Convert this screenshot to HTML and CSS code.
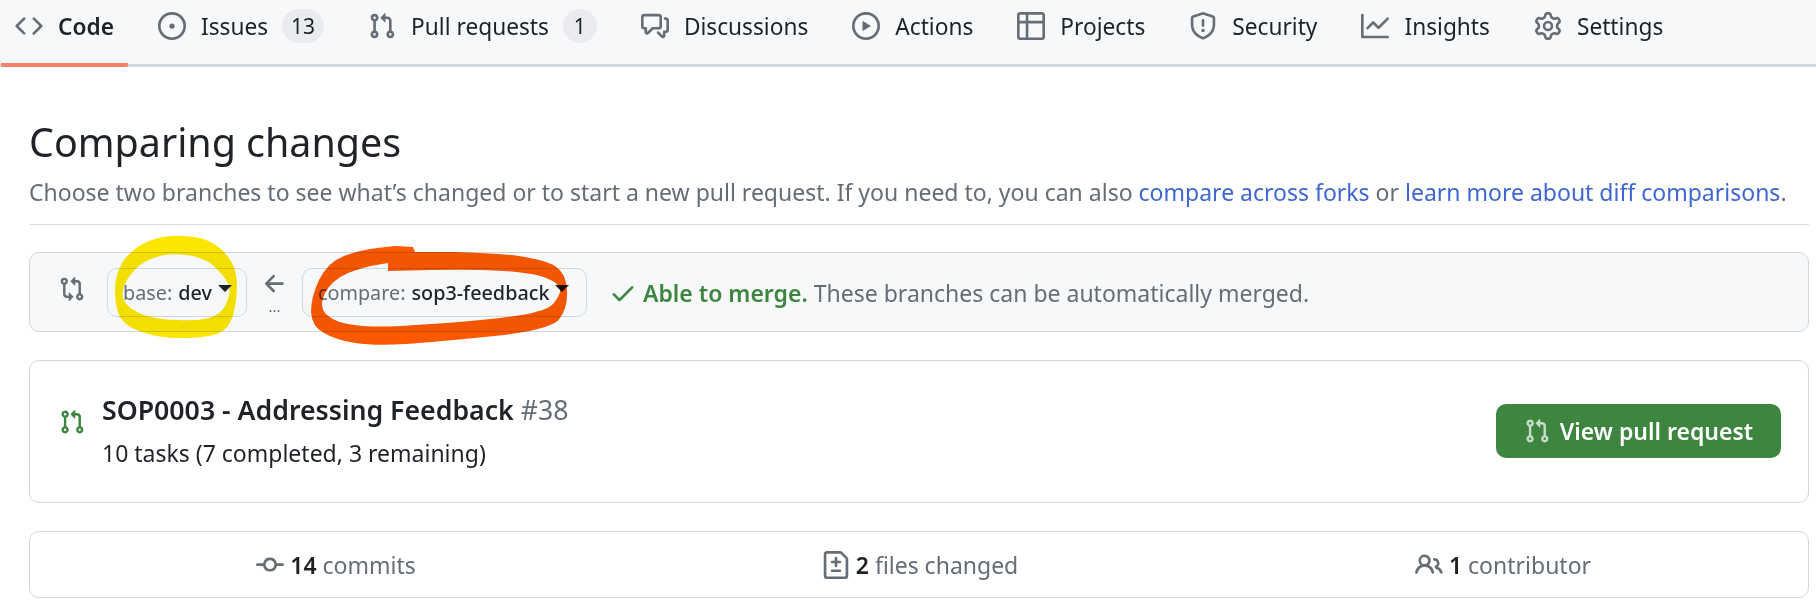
FILE: index.html
```html
<!DOCTYPE html>
<html lang="en">
<head>
  <meta charset="UTF-8">
  <title>Comparing changes</title>
  <link rel="stylesheet" href="styles.css">
</head>
<body>
  <svg class="sprite" xmlns="http://www.w3.org/2000/svg">
    <symbol id="i-code" viewBox="0 0 16 16"><path d="M11.28 3.22a.75.75 0 0 0-1.06 1.06L13.94 8l-3.72 3.72a.75.75 0 1 0 1.06 1.06l4.25-4.25a.75.75 0 0 0 0-1.06Zm-6.56 0a.75.75 0 0 1 1.06 1.06L2.06 8l3.72 3.72a.75.75 0 0 1-1.06 1.06L.47 8.53a.75.75 0 0 1 0-1.06Z"/></symbol>
    <symbol id="i-issue" viewBox="0 0 16 16"><path d="M8 9.5a1.5 1.5 0 1 0 0-3 1.5 1.5 0 0 0 0 3Z"/><path d="M8 0a8 8 0 1 1 0 16A8 8 0 0 1 8 0ZM1.5 8a6.5 6.5 0 1 0 13 0 6.5 6.5 0 0 0-13 0Z"/></symbol>
    <symbol id="i-pr" viewBox="0 0 16 16"><path d="M1.5 3.25a2.25 2.25 0 1 1 3 2.122v5.256a2.251 2.251 0 1 1-1.5 0V5.372A2.25 2.25 0 0 1 1.5 3.25Zm5.677-.177L9.573.677A.25.25 0 0 1 10 .854V2.5h1A2.5 2.5 0 0 1 13.5 5v5.628a2.251 2.251 0 1 1-1.5 0V5a1 1 0 0 0-1-1h-1v1.646a.25.25 0 0 1-.427.177L7.177 3.427a.25.25 0 0 1 0-.354ZM3.75 2.5a.75.75 0 1 0 0 1.5.75.75 0 0 0 0-1.5Zm0 9.5a.75.75 0 1 0 0 1.5.75.75 0 0 0 0-1.5Zm8.25.75a.75.75 0 1 0 1.5 0 .75.75 0 0 0-1.5 0Z"/></symbol>
    <symbol id="i-discuss" viewBox="0 0 16 16"><path d="M1.75 1h8.5c.966 0 1.75.784 1.75 1.75v5.5A1.75 1.75 0 0 1 10.25 10H7.061l-2.574 2.573A1.458 1.458 0 0 1 2 11.543V10h-.25A1.75 1.75 0 0 1 0 8.25v-5.5C0 1.784.784 1 1.75 1ZM1.5 2.75v5.5c0 .138.112.25.25.25h1a.75.75 0 0 1 .75.75v2.19l2.72-2.72a.749.749 0 0 1 .53-.22h3.5a.25.25 0 0 0 .25-.25v-5.5a.25.25 0 0 0-.25-.25h-8.5a.25.25 0 0 0-.25.25Zm13 2a.25.25 0 0 0-.25-.25h-.5a.75.75 0 0 1 0-1.5h.5c.966 0 1.75.784 1.75 1.75v5.5A1.75 1.75 0 0 1 14.25 12H14v1.543a1.458 1.458 0 0 1-2.487 1.03L9.22 12.28a.749.749 0 0 1 .326-1.275.749.749 0 0 1 .734.215l2.22 2.22v-2.19a.75.75 0 0 1 .75-.75h1a.25.25 0 0 0 .25-.25Z"/></symbol>
    <symbol id="i-play" viewBox="0 0 16 16"><path d="M8 0a8 8 0 1 1 0 16A8 8 0 0 1 8 0ZM1.5 8a6.5 6.5 0 1 0 13 0 6.5 6.5 0 0 0-13 0Zm4.879-2.773 4.264 2.559a.25.25 0 0 1 0 .428l-4.264 2.559A.25.25 0 0 1 6 10.559V5.442a.25.25 0 0 1 .379-.215Z"/></symbol>
    <symbol id="i-table" viewBox="0 0 16 16"><path d="M0 1.75C0 .784.784 0 1.75 0h12.5C15.216 0 16 .784 16 1.75v12.5A1.75 1.75 0 0 1 14.25 16H1.75A1.75 1.75 0 0 1 0 14.25ZM6.5 6.5v8h7.75a.25.25 0 0 0 .25-.25V6.5Zm8-1.5V1.75a.25.25 0 0 0-.25-.25H6.5V5Zm-13 1.5v7.75c0 .138.112.25.25.25H5v-8ZM5 5V1.5H1.75a.25.25 0 0 0-.25.25V5Z"/></symbol>
    <symbol id="i-shield" viewBox="0 0 16 16"><path d="M7.467.133a1.748 1.748 0 0 1 1.066 0l5.25 1.68A1.75 1.75 0 0 1 15 3.48V7c0 1.566-.32 3.182-1.303 4.682-.983 1.498-2.585 2.813-5.032 3.855a1.697 1.697 0 0 1-1.33 0c-2.447-1.042-4.049-2.357-5.032-3.855C1.32 10.182 1 8.566 1 7V3.48a1.75 1.75 0 0 1 1.217-1.667Zm.61 1.429a.25.25 0 0 0-.153 0l-5.25 1.68a.25.25 0 0 0-.174.238V7c0 1.358.275 2.666 1.057 3.86.784 1.194 2.121 2.34 4.366 3.297a.196.196 0 0 0 .154 0c2.245-.956 3.582-2.104 4.366-3.298C13.225 9.666 13.5 8.36 13.5 7V3.48a.251.251 0 0 0-.174-.237l-5.25-1.68ZM8.75 4.75v3a.75.75 0 0 1-1.5 0v-3a.75.75 0 0 1 1.5 0ZM9 10.5a1 1 0 1 1-2 0 1 1 0 0 1 2 0Z"/></symbol>
    <symbol id="i-graph" viewBox="0 0 16 16"><path d="M1.5 1.75V13.5h13.75a.75.75 0 0 1 0 1.5H.75a.75.75 0 0 1-.75-.75V1.75a.75.75 0 0 1 1.5 0Zm14.28 2.53-5.25 5.25a.75.75 0 0 1-1.06 0L7 7.06 4.28 9.78a.751.751 0 0 1-1.042-.018.751.751 0 0 1-.018-1.042l3.25-3.25a.75.75 0 0 1 1.06 0L10 7.94l4.72-4.72a.751.751 0 0 1 1.042.018.751.751 0 0 1 .018 1.042Z"/></symbol>
    <symbol id="i-gear" viewBox="0 0 16 16"><path d="M8 0a8.2 8.2 0 0 1 .701.031C9.444.095 9.99.645 10.16 1.29l.288 1.107c.018.066.079.158.212.224.231.114.454.243.668.386.123.082.233.09.299.071l1.103-.303c.644-.176 1.392.021 1.82.63.27.385.506.792.704 1.218.315.675.111 1.422-.364 1.891l-.814.806c-.049.048-.098.147-.088.294.016.257.016.515 0 .772-.01.147.038.246.088.294l.814.806c.475.469.679 1.216.364 1.891a7.977 7.977 0 0 1-.704 1.217c-.428.61-1.176.807-1.82.63l-1.102-.302c-.067-.019-.177-.011-.3.071a5.909 5.909 0 0 1-.668.386c-.133.066-.194.158-.211.224l-.29 1.106c-.168.646-.715 1.196-1.458 1.26a8.006 8.006 0 0 1-1.402 0c-.743-.064-1.289-.614-1.458-1.26l-.289-1.106c-.018-.066-.079-.158-.212-.224a5.738 5.738 0 0 1-.668-.386c-.123-.082-.233-.09-.299-.071l-1.103.303c-.644.176-1.392-.021-1.82-.63a8.12 8.12 0 0 1-.704-1.218c-.315-.675-.111-1.422.363-1.891l.815-.806c.05-.048.098-.147.088-.294a6.214 6.214 0 0 1 0-.772c.01-.147-.038-.246-.088-.294l-.815-.806C.635 6.045.431 5.298.746 4.623a7.92 7.92 0 0 1 .704-1.217c.428-.61 1.176-.807 1.82-.63l1.102.302c.067.019.177.011.3-.071.214-.143.437-.272.668-.386.133-.066.194-.158.211-.224l.29-1.106C6.009.645 6.556.095 7.299.03 7.53.01 7.764 0 8 0Zm-.571 1.525c-.036.003-.108.036-.137.146l-.289 1.105c-.147.561-.549.967-.998 1.189-.173.086-.34.183-.5.29-.417.278-.97.423-1.529.27l-1.103-.303c-.109-.03-.175.016-.195.045-.22.312-.412.644-.573.99-.014.031-.021.11.059.19l.815.806c.411.406.562.957.53 1.456a4.709 4.709 0 0 0 0 .582c.032.499-.119 1.05-.53 1.456l-.815.806c-.081.08-.073.159-.059.19.162.346.353.677.573.989.02.03.085.076.195.046l1.102-.303c.56-.153 1.113-.008 1.53.27.161.107.328.204.501.29.447.222.85.629.997 1.189l.289 1.105c.029.109.101.143.137.146a6.6 6.6 0 0 0 1.142 0c.036-.003.108-.036.137-.146l.289-1.105c.147-.561.549-.967.998-1.189.173-.086.34-.183.5-.29.417-.278.97-.423 1.529-.27l1.103.303c.109.029.175-.016.195-.045.22-.313.411-.644.573-.99.014-.031.021-.11-.059-.19l-.815-.806c-.411-.406-.562-.957-.53-1.456a4.709 4.709 0 0 0 0-.582c-.032-.499.119-1.05.53-1.456l.815-.806c.081-.08.073-.159.059-.19a6.464 6.464 0 0 0-.573-.989c-.02-.03-.085-.076-.195-.046l-1.102.303c-.56.153-1.113.008-1.53-.27a4.44 4.44 0 0 0-.501-.29c-.447-.222-.85-.629-.997-1.189l-.289-1.105c-.029-.11-.101-.143-.137-.146a6.6 6.6 0 0 0-1.142 0ZM11 8a3 3 0 1 1-6 0 3 3 0 0 1 6 0ZM9.5 8a1.5 1.5 0 1 0-3.001.001A1.5 1.5 0 0 0 9.5 8Z"/></symbol>
    <symbol id="i-compare" viewBox="0 0 16 16"><path d="M9.573.677A.25.25 0 0 1 10 .854V2.5h1A2.5 2.5 0 0 1 13.5 5v5.628a2.251 2.251 0 1 1-1.5 0V5a1 1 0 0 0-1-1h-1v1.646a.25.25 0 0 1-.427.177L7.177 3.427a.25.25 0 0 1 0-.354ZM6 12v-1.646a.25.25 0 0 1 .427-.177l2.396 2.396a.25.25 0 0 1 0 .354l-2.396 2.396A.25.25 0 0 1 6 15.146V13.5H5A2.5 2.5 0 0 1 2.5 11V5.372a2.25 2.25 0 1 1 1.5 0V11a1 1 0 0 0 1 1ZM4 3.25a.75.75 0 1 0-1.5 0 .75.75 0 0 0 1.5 0ZM12.75 12a.75.75 0 1 0 0 1.5.75.75 0 0 0 0-1.5Z"/></symbol>
    <symbol id="i-arrow" viewBox="0 0 16 16"><path d="M7.78 12.53a.75.75 0 0 1-1.06 0L2.47 8.28a.75.75 0 0 1 0-1.06l4.25-4.25a.751.751 0 0 1 1.042.018.751.751 0 0 1 .018 1.042L4.81 7h7.44a.75.75 0 0 1 0 1.5H4.81l2.97 2.97a.75.75 0 0 1 0 1.06Z"/></symbol>
    <symbol id="i-check" viewBox="0 0 16 16"><path d="M13.78 4.22a.75.75 0 0 1 0 1.06l-7.25 7.25a.75.75 0 0 1-1.06 0L2.22 9.28a.751.751 0 0 1 .018-1.042.751.751 0 0 1 1.042-.018L6 10.94l6.72-6.72a.75.75 0 0 1 1.06 0Z"/></symbol>
    <symbol id="i-commit" viewBox="0 0 16 16"><path d="M11.93 8.5a4.002 4.002 0 0 1-7.86 0H.75a.75.75 0 0 1 0-1.5h3.32a4.002 4.002 0 0 1 7.86 0h3.32a.75.75 0 0 1 0 1.5Zm-1.43-.75a2.5 2.5 0 1 0-5 0 2.5 2.5 0 0 0 5 0Z"/></symbol>
    <symbol id="i-diff" viewBox="0 0 16 16"><path d="M1 1.75C1 .784 1.784 0 2.75 0h7.586c.464 0 .909.184 1.237.513l2.914 2.914c.329.328.513.773.513 1.237v9.586A1.75 1.75 0 0 1 13.25 16H2.75A1.75 1.75 0 0 1 1 14.25Zm1.75-.25a.25.25 0 0 0-.25.25v12.5c0 .138.112.25.25.25h10.5a.25.25 0 0 0 .25-.25V4.664a.25.25 0 0 0-.073-.177l-2.914-2.914a.25.25 0 0 0-.177-.073ZM8 3.25a.75.75 0 0 1 .75.75v1.5h1.5a.75.75 0 0 1 0 1.5h-1.5v1.5a.75.75 0 0 1-1.5 0V7h-1.5a.75.75 0 0 1 0-1.5h1.5V4A.75.75 0 0 1 8 3.25Zm-3 8a.75.75 0 0 1 .75-.75h4.5a.75.75 0 0 1 0 1.5h-4.5a.75.75 0 0 1-.75-.75Z"/></symbol>
    <symbol id="i-people" viewBox="0 0 16 16"><path d="M2 5.5a3.5 3.5 0 1 1 5.898 2.549 5.508 5.508 0 0 1 3.034 4.084.75.75 0 1 1-1.482.235 4 4 0 0 0-7.9 0 .75.75 0 0 1-1.482-.236A5.507 5.507 0 0 1 3.102 8.05 3.493 3.493 0 0 1 2 5.5ZM11 4a3.001 3.001 0 0 1 2.22 5.018 5.01 5.01 0 0 1 2.56 3.012.749.749 0 0 1-.885.954.752.752 0 0 1-.549-.514 3.507 3.507 0 0 0-2.522-2.372.75.75 0 0 1-.574-.73v-.352a.75.75 0 0 1 .416-.672A1.5 1.5 0 0 0 11 5.5.75.75 0 0 1 11 4Zm-5.5-.5a2 2 0 1 0-.001 3.999A2 2 0 0 0 5.5 3.5Z"/></symbol>
  </svg>

  <nav class="tabs">
    <a class="tab current"><svg class="icon"><use href="#i-code"/></svg><span>Code</span></a>
    <a class="tab"><svg class="icon"><use href="#i-issue"/></svg><span>Issues</span><span class="counter">13</span></a>
    <a class="tab"><svg class="icon"><use href="#i-pr"/></svg><span>Pull requests</span><span class="counter">1</span></a>
    <a class="tab"><svg class="icon"><use href="#i-discuss"/></svg><span>Discussions</span></a>
    <a class="tab"><svg class="icon"><use href="#i-play"/></svg><span>Actions</span></a>
    <a class="tab"><svg class="icon"><use href="#i-table"/></svg><span>Projects</span></a>
    <a class="tab"><svg class="icon"><use href="#i-shield"/></svg><span>Security</span></a>
    <a class="tab"><svg class="icon"><use href="#i-graph"/></svg><span>Insights</span></a>
    <a class="tab"><svg class="icon"><use href="#i-gear"/></svg><span>Settings</span></a>
  </nav>

  <main class="content">
    <div class="subhead">
      <h1>Comparing changes</h1>
      <p>Choose two branches to see what’s changed or to start a new pull request. If you need to, you can also <a>compare across forks</a> or <a>learn more about diff comparisons</a>.</p>
    </div>

    <div class="range">
      <svg class="icon range-icon"><use href="#i-compare"/></svg>
      <div class="branch base-branch"><span class="muted">base:</span> <b>dev</b><i class="caret"></i></div>
      <div class="range-sep">
        <svg class="icon arrow"><use href="#i-arrow"/></svg>
        <span>...</span>
      </div>
      <div class="branch head-branch"><span class="muted">compare:</span> <b>sop3-feedback</b><i class="caret"></i></div>
      <svg class="icon check"><use href="#i-check"/></svg>
      <div class="merge"><b>Able to merge.</b> <span class="muted">These branches can be automatically merged.</span></div>
    </div>

    <div class="card pr-card">
      <svg class="icon pr-icon"><use href="#i-pr"/></svg>
      <div class="pr-text">
        <div class="pr-title"><b>SOP0003 - Addressing Feedback</b> <span class="muted">#38</span></div>
        <div class="pr-tasks">10 tasks (7 completed, 3 remaining)</div>
      </div>
      <a class="btn"><svg class="icon"><use href="#i-pr"/></svg>View pull request</a>
    </div>

    <div class="card stats">
      <div class="stat"><svg class="icon"><use href="#i-commit"/></svg><span><b>14</b> <span class="muted">commits</span></span></div>
      <div class="stat"><svg class="icon"><use href="#i-diff"/></svg><span><b>2</b> <span class="muted">files changed</span></span></div>
      <div class="stat"><svg class="icon"><use href="#i-people"/></svg><span><b>1</b> <span class="muted">contributor</span></span></div>
    </div>
  </main>

  <!-- marker scribbles drawn over the screenshot -->
  <svg class="marks" viewBox="0 0 1816 601" xmlns="http://www.w3.org/2000/svg">
    <path fill="#fbe600" fill-rule="evenodd" d="M149 241Q164 235 184 236Q205 237 216 245Q227 253 232 263Q237 273 237 286Q237 300 233 315Q229 330 217 334Q205 338 181 338Q158 338 142 332Q126 327 120 317Q115 307 115 290Q115 273 124 260Q134 247 149 241ZM140 265Q150 258 164 255Q178 253 193 256Q209 260 218 270Q227 280 229 286Q231 293 226 304Q221 315 209 318Q198 321 178 320Q158 320 144 315Q130 310 125 302Q120 295 125 284Q130 273 140 265Z"/>
    <path fill="#fb5800" fill-rule="evenodd" d="M395 246L413 247L415 252L454 252Q494 253 519 256Q545 260 555 266Q566 273 567 290Q568 307 560 318Q553 330 494 336Q435 342 405 344Q375 346 355 343Q336 340 324 333Q312 327 311 312Q311 297 319 280Q328 262 344 256Q360 250 377 248ZM388 263L388 271L431 270Q474 269 504 271Q534 273 546 278Q559 283 560 289Q561 295 553 304Q545 313 500 318Q455 323 415 325Q375 328 355 325Q336 323 327 315Q318 307 325 293Q332 280 348 273Q364 267 376 265Z"/>
  </svg>
</body>
</html>
```
FILE: styles.css
```css
* {
  box-sizing: border-box;
}
body {
  margin: 0;
  background: #fff;
  color: #1f2328;
  font-family: "Noto Sans", "Open Sans", sans-serif;
  font-size: 23px;
  position: relative;
  height: 601px;
  overflow: hidden;
}
b {
  font-weight: 600;
}
.sprite {
  display: none;
}
.icon {
  width: 28px;
  height: 28px;
  fill: #656d76;
  flex: none;
}
.muted {
  color: #656d76;
}

/* tabs */
.tabs {
  display: flex;
  gap: 16px;
  height: 67px;
  padding-left: 1px;
  background: #f6f8fa;
  border-bottom: 3px solid #d0d7de;
  font-size: 22.7px;
}
.tab {
  display: flex;
  align-items: center;
  gap: 15px;
  height: 67px;
  padding: 0 14px 15px;
  white-space: nowrap;
}
.tab.current {
  font-weight: 600;
  border-bottom: 4px solid #f78166;
  border-radius: 0 0 2px 2px;
  padding-bottom: 11px;
}
.counter {
  min-width: 34px;
  height: 34px;
  line-height: 34px;
  padding: 0 9px;
  margin-left: -1px;
  border-radius: 17px;
  background: #e9ebee;
  font-size: 21px;
  text-align: center;
}

/* page */
.content {
  padding: 0 7px 0 29px;
}
.subhead {
  padding-top: 44px;
  padding-bottom: 14px;
  border-bottom: 1px solid #d8dee4;
}
.subhead h1 {
  margin: 0;
  font-size: 39.4px;
  font-weight: 400;
  line-height: 63px;
}
.subhead p {
  margin: 0;
  color: #656d76;
  line-height: 36px;
  white-space: nowrap;
}
.subhead a {
  color: #3f67d4;
}

.range {
  display: flex;
  align-items: center;
  height: 80px;
  margin-top: 27px;
  padding-left: 29px;
  padding-top: 2px;
  background: #f6f8fa;
  border: 1px solid #d0d7de;
  border-radius: 10px;
}
.range-icon {
  width: 26px;
  height: 26px;
  margin-bottom: 8px;
}
.branch {
  display: flex;
  align-items: center;
  gap: 6px;
  height: 49px;
  margin-bottom: 2px;
  padding: 0 15px;
  border: 1px solid #d0d7de;
  border-radius: 10px;
  font-size: 19.8px;
  white-space: nowrap;
}
.branch b {
  font-weight: 500;
  color: #1f2328;
}
.base-branch {
  width: 140px;
  margin-left: 22px;
}
.head-branch {
  width: 285px;
}
.caret {
  width: 0;
  height: 0;
  margin-bottom: 8px;
  border-left: 7px solid transparent;
  border-right: 7px solid transparent;
  border-top: 7px solid #1f2328;
}
.range-sep {
  display: flex;
  flex-direction: column;
  align-items: center;
  width: 55px;
  margin-bottom: 2px;
  color: #656d76;
  font-size: 15px;
  line-height: 16px;
}
.arrow {
  width: 28px;
  height: 28px;
}
.check {
  fill: #3e8540;
  margin-left: 22px;
}
.merge {
  margin-left: 6px;
  white-space: nowrap;
}
.merge b {
  color: #3e8540;
}

.card {
  background: #fff;
  border: 1px solid #d0d7de;
  border-radius: 10px;
}
.pr-card {
  display: flex;
  align-items: center;
  height: 143px;
  margin-top: 28px;
  padding-left: 29px;
}
.pr-icon {
  fill: #3e8540;
  width: 26px;
  height: 26px;
  margin-bottom: 20px;
}
.pr-text {
  margin-left: 17px;
  padding-top: 4px;
  flex: 1;
}
.pr-title {
  font-size: 26.7px;
  line-height: 38px;
}
.pr-tasks {
  line-height: 48px;
}
.btn {
  display: flex;
  align-items: center;
  justify-content: center;
  gap: 10px;
  width: 285px;
  height: 54px;
  margin-right: 27px;
  margin-bottom: 2px;
  background: #3e8540;
  border-radius: 10px;
  color: #fff;
  font-weight: 600;
  white-space: nowrap;
}
.btn .icon {
  width: 26px;
  height: 26px;
  fill: #c6dcc7;
}

.stats {
  display: grid;
  grid-template-columns: 612px 556px 1fr;
  height: 67px;
  margin-top: 28px;
}
.stat {
  display: flex;
  align-items: center;
  justify-content: center;
  gap: 6px;
  white-space: nowrap;
}

/* marker scribbles */
.marks {
  position: absolute;
  left: 0;
  top: 0;
  width: 1816px;
  height: 601px;
  mix-blend-mode: multiply;
  pointer-events: none;
}
```
